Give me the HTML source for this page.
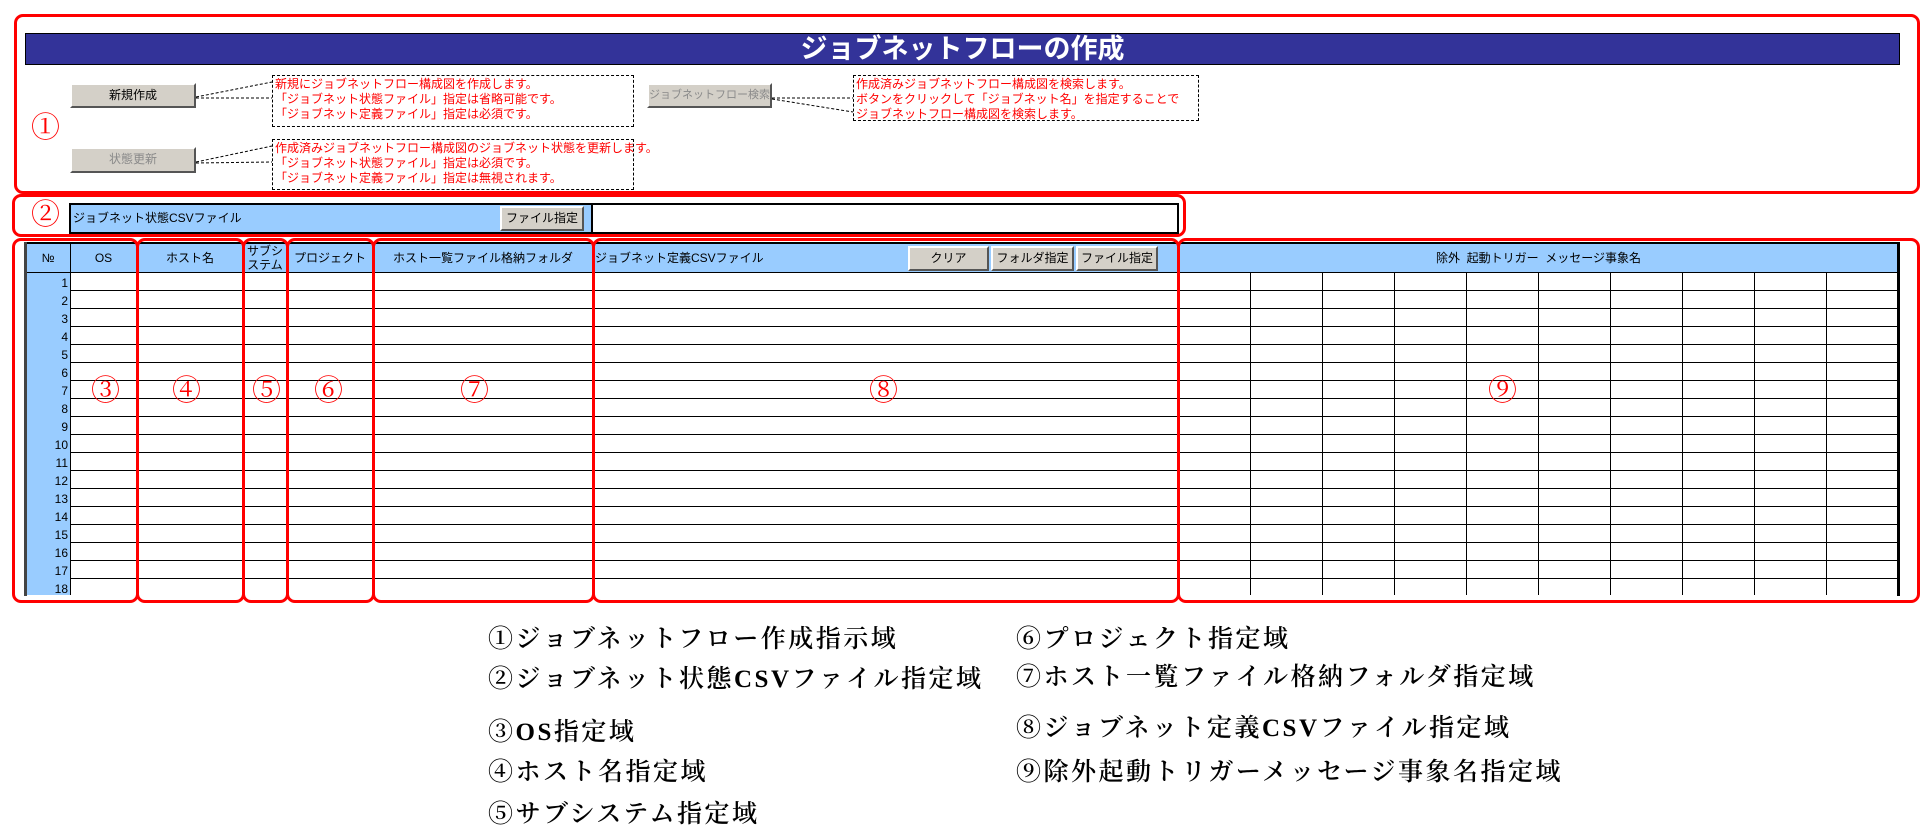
<!DOCTYPE html>
<html><head><meta charset="utf-8">
<style>
*{margin:0;padding:0;box-sizing:border-box}
body{width:1924px;height:839px;background:#fff;position:relative;overflow:hidden;font-family:"Liberation Sans","Noto Sans CJK JP",sans-serif}
.a{position:absolute}
.red{position:absolute;border:3px solid #f00;border-radius:9px}
.btn{position:absolute;background:#d4d0c8;border-top:2px solid #fff;border-left:2px solid #fff;border-right:2px solid #555;border-bottom:2px solid #555;font-size:12px;text-align:center;color:#000;line-height:20px;white-space:nowrap;overflow:hidden}
.btn.dis{color:#8a8a8a}
.dash{position:absolute;border:1.5px dashed #000;color:#f00;font-size:12px;line-height:15px;padding:1px 2px;white-space:nowrap}
.circ{position:absolute;color:#f00;font-family:"Liberation Serif","Noto Serif CJK SC",serif;font-size:29px;line-height:28px}
.leg{position:absolute;font-family:"Liberation Serif","Noto Serif CJK SC",serif;font-size:25px;letter-spacing:2.5px;color:#000;white-space:nowrap;line-height:28px;font-weight:600}
.hdr{position:absolute;top:243px;height:30px;font-size:12px;text-align:center;line-height:30px}
.vl{position:absolute;width:1px;background:#000}
.num{position:absolute;left:26px;width:42px;text-align:right;font-size:12px;line-height:18px}
</style></head><body>

<div class="red" style="left:14px;top:14px;width:1906px;height:180px"></div>
<div class="a" style="left:25px;top:33px;width:1875px;height:32px;background:#333399;border:1px solid #000"></div>
<div class="a" style="left:25px;top:33px;width:1875px;height:32px;color:#fff;font-weight:bold;font-size:27px;line-height:32px;text-align:center">ジョブネットフローの作成</div>
<div class="circ" style="left:31px;top:114px">①</div>

<div class="btn" style="left:70px;top:83px;width:126px;height:25px">新規作成</div>
<div class="btn dis" style="left:70px;top:147px;width:126px;height:26px">状態更新</div>
<div class="btn dis" style="left:647px;top:83px;width:125px;height:25px;font-size:11px">ジョブネットフロー検索</div>

<svg class="a" style="left:0;top:0" width="1924" height="240">
<g stroke="#000" stroke-width="1" stroke-dasharray="3,2" fill="none">
<path d="M196 97 L272 82 M196 98 L272 98"/>
<path d="M196 162 L272 146 M196 163 L272 162"/>
<path d="M772 98 L853 98 M772 99 L853 112"/>
</g></svg>

<div class="dash" style="left:272px;top:75px;width:362px;height:52px">新規にジョブネットフロー構成図を作成します。<br>「ジョブネット状態ファイル」指定は省略可能です。<br>「ジョブネット定義ファイル」指定は必須です。</div>
<div class="dash" style="left:272px;top:139px;width:362px;height:51px">作成済みジョブネットフロー構成図のジョブネット状態を更新します。<br>「ジョブネット状態ファイル」指定は必須です。<br>「ジョブネット定義ファイル」指定は無視されます。</div>
<div class="dash" style="left:853px;top:75px;width:346px;height:46px">作成済みジョブネットフロー構成図を検索します。<br>ボタンをクリックして「ジョブネット名」を指定することで<br>ジョブネットフロー構成図を検索します。</div>

<div class="red" style="left:12px;top:194px;width:1174px;height:43px"></div>
<div class="circ" style="left:31px;top:201px">②</div>
<div class="a" style="left:69px;top:203px;width:1110px;height:31px;border:2px solid #000;background:#fff"></div>
<div class="a" style="left:71px;top:205px;width:522px;height:27px;background:#99ccff;border-right:2px solid #000;font-size:12px;line-height:27px;padding-left:2px">ジョブネット状態CSVファイル</div>
<div class="btn" style="left:500px;top:206px;width:84px;height:25px">ファイル指定</div>

<div class="a" style="left:26px;top:242px;width:1873px;height:31px;background:#99ccff;border-top:2px solid #000"></div>
<div class="a" style="left:26px;top:273px;width:44px;height:322px;background:#99ccff"></div>
<div class="a" style="left:70px;top:273px;width:1829px;height:322px;background:repeating-linear-gradient(to bottom,#fff 0,#fff 17px,#000 17px,#000 18px)"></div>
<div class="a" style="left:26px;top:272px;width:1873px;height:1px;background:#000"></div>
<div class="a" style="left:24px;top:242px;width:3px;height:354px;background:#444"></div>
<div class="a" style="left:1897px;top:242px;width:3px;height:354px;background:#000"></div>
<div class="vl" style="left:70px;top:243px;height:352px"></div>
<div class="vl" style="left:137px;top:243px;height:352px"></div>
<div class="vl" style="left:243px;top:243px;height:352px"></div>
<div class="vl" style="left:287px;top:243px;height:352px"></div>
<div class="vl" style="left:373px;top:243px;height:352px"></div>
<div class="vl" style="left:593px;top:243px;height:352px"></div>
<div class="vl" style="left:1178px;top:243px;height:352px"></div>
<div class="vl" style="left:1250px;top:273px;height:322px"></div>
<div class="vl" style="left:1322px;top:273px;height:322px"></div>
<div class="vl" style="left:1394px;top:273px;height:322px"></div>
<div class="vl" style="left:1466px;top:273px;height:322px"></div>
<div class="vl" style="left:1538px;top:273px;height:322px"></div>
<div class="vl" style="left:1610px;top:273px;height:322px"></div>
<div class="vl" style="left:1682px;top:273px;height:322px"></div>
<div class="vl" style="left:1754px;top:273px;height:322px"></div>
<div class="vl" style="left:1826px;top:273px;height:322px"></div>
<div class="hdr" style="left:26px;width:44px">№</div>
<div class="hdr" style="left:70px;width:67px">OS</div>
<div class="hdr" style="left:137px;width:106px">ホスト名</div>
<div class="hdr" style="left:243px;width:44px;line-height:14px;padding-top:1px">サブシ<br>ステム</div>
<div class="hdr" style="left:287px;width:86px">プロジェクト</div>
<div class="hdr" style="left:373px;width:220px">ホスト一覧ファイル格納フォルダ</div>
<div class="hdr" style="left:595px;width:200px;text-align:left">ジョブネット定義CSVファイル</div>
<div class="hdr" style="left:1178px;width:721px">除外&nbsp;&nbsp;起動トリガー&nbsp;&nbsp;メッセージ事象名</div>
<div class="btn" style="left:908px;top:246px;width:81px;height:25px">クリア</div>
<div class="btn" style="left:991px;top:246px;width:83px;height:25px">フォルダ指定</div>
<div class="btn" style="left:1076px;top:246px;width:82px;height:25px">ファイル指定</div>
<div class="num" style="top:274px">1</div><div class="num" style="top:292px">2</div><div class="num" style="top:310px">3</div><div class="num" style="top:328px">4</div><div class="num" style="top:346px">5</div><div class="num" style="top:364px">6</div><div class="num" style="top:382px">7</div><div class="num" style="top:400px">8</div><div class="num" style="top:418px">9</div><div class="num" style="top:436px">10</div><div class="num" style="top:454px">11</div><div class="num" style="top:472px">12</div><div class="num" style="top:490px">13</div><div class="num" style="top:508px">14</div><div class="num" style="top:526px">15</div><div class="num" style="top:544px">16</div><div class="num" style="top:562px">17</div><div class="num" style="top:580px">18</div>

<div class="red" style="left:12px;top:238px;width:127px;height:365px"></div>
<div class="red" style="left:136px;top:238px;width:109px;height:365px"></div>
<div class="red" style="left:242px;top:238px;width:47px;height:365px"></div>
<div class="red" style="left:286px;top:238px;width:89px;height:365px"></div>
<div class="red" style="left:372px;top:238px;width:223px;height:365px"></div>
<div class="red" style="left:592px;top:238px;width:588px;height:365px"></div>
<div class="red" style="left:1177px;top:238px;width:743px;height:365px"></div>
<div class="circ" style="left:91px;top:377px">③</div>
<div class="circ" style="left:172px;top:377px">④</div>
<div class="circ" style="left:252px;top:377px">⑤</div>
<div class="circ" style="left:314px;top:377px">⑥</div>
<div class="circ" style="left:460px;top:377px">⑦</div>
<div class="circ" style="left:869px;top:377px">⑧</div>
<div class="circ" style="left:1488px;top:377px">⑨</div>

<div class="leg" style="left:488px;top:626px">①ジョブネットフロー作成指示域</div>
<div class="leg" style="left:488px;top:666px">②ジョブネット状態CSVファイル指定域</div>
<div class="leg" style="left:488px;top:719px">③OS指定域</div>
<div class="leg" style="left:488px;top:759px">④ホスト名指定域</div>
<div class="leg" style="left:488px;top:801px">⑤サブシステム指定域</div>
<div class="leg" style="left:1016px;top:626px">⑥プロジェクト指定域</div>
<div class="leg" style="left:1016px;top:664px">⑦ホスト一覧ファイル格納フォルダ指定域</div>
<div class="leg" style="left:1016px;top:715px">⑧ジョブネット定義CSVファイル指定域</div>
<div class="leg" style="left:1016px;top:759px">⑨除外起動トリガーメッセージ事象名指定域</div>
</body></html>
